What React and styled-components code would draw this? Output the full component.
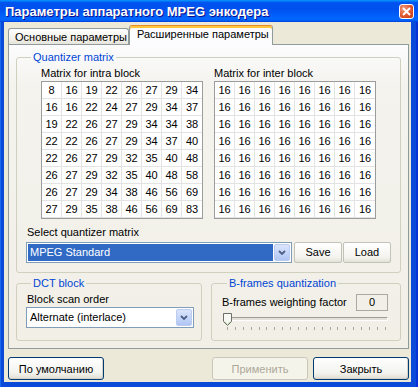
import React from 'react'
import styled, { createGlobalStyle } from 'styled-components'

const GlobalStyle = createGlobalStyle`
  html, body {
    margin: 0;
    padding: 0;
  }
  body {
    font-family: "Liberation Sans", Arial, sans-serif;
    font-size: 11px;
    color: #000;
  }
  * {
    box-sizing: border-box;
  }
`

const intra = [
  [8, 16, 19, 22, 26, 27, 29, 34],
  [16, 16, 22, 24, 27, 29, 34, 37],
  [19, 22, 26, 27, 29, 34, 34, 38],
  [22, 22, 26, 27, 29, 34, 37, 40],
  [22, 26, 27, 29, 32, 35, 40, 48],
  [26, 27, 29, 32, 35, 40, 48, 58],
  [26, 27, 29, 34, 38, 46, 56, 69],
  [27, 29, 35, 38, 46, 56, 69, 83],
]
const inter = Array.from({ length: 8 }, () => Array(8).fill(16))

const Window = styled.div`
  width: 418px;
  height: 387px;
  display: flex;
  flex-direction: column;
  background: #0a4ad8;
  box-shadow: inset -2px 0 #0831d9, inset 1px 0 #166aee;
`

const TitleBar = styled.div`
  height: 22px;
  flex: none;
  display: flex;
  align-items: center;
  justify-content: space-between;
  padding: 0 4px 0 5px;
  background: linear-gradient(
    to bottom,
    #0997ff 0%,
    #0053ee 12%,
    #0050ee 40%,
    #0066ff 85%,
    #0063fb 92%,
    #003dd7 100%
  );
  color: #fff;
  font-weight: bold;
  font-size: 13px;
  text-shadow: 1px 1px #0f1089;
`

const CloseButton = styled.div`
  width: 15px;
  height: 15px;
  border: 1px solid #fff;
  border-radius: 3px;
  background: radial-gradient(circle at 30% 30%, #f19a7c 0%, #e0552e 55%, #c13b12 100%);
  display: flex;
  align-items: center;
  justify-content: center;
`

const Client = styled.div`
  flex: 1;
  margin: 0 7px 5px 4px;
  background: #ece9d8;
  padding: 3px 2px 2px 4px;
  display: flex;
  flex-direction: column;
`

const TabRow = styled.div`
  height: 19px;
  flex: none;
  display: flex;
  align-items: flex-end;
  position: relative;
  z-index: 1;
`

const Tab = styled.div`
  width: ${(p) => p.$w}px;
  height: ${(p) => (p.$active ? 20 : 16)}px;
  margin-bottom: ${(p) => (p.$active ? -1 : 0)}px;
  border: 1px solid #919b9c;
  border-bottom: none;
  border-radius: 3px 3px 0 0;
  padding-left: ${(p) => (p.$active ? 7 : 6)}px;
  line-height: ${(p) => (p.$active ? 17 : 16)}px;
  white-space: nowrap;
  background: ${(p) =>
    p.$active ? '#fcfcfe' : 'linear-gradient(to bottom, #fefefe, #f1f0ea 70%, #e6e4da)'};
  ${(p) =>
    p.$active &&
    `
    border-top: 1px solid #e68b2c;
    box-shadow: inset 0 2px #ffc73c;
  `}
`

const Panel = styled.div`
  height: 305px;
  flex: none;
  border: 1px solid #919b9c;
  background: linear-gradient(to bottom, #fcfcfe 0, #f4f3ee 40px, #f1efe6 100%);
  padding: 6px 7px 7px 7px;
  display: flex;
  flex-direction: column;
  gap: 4px;
`

const GroupBox = styled.fieldset`
  margin: 0;
  min-width: 0;
  border: 1px solid #d0d0bf;
  border-radius: 3px;
  padding: ${(p) => p.$pad};
  flex: ${(p) => (p.$grow ? 1 : 'none')};
  display: flex;
  flex-direction: column;
`

const Legend = styled.legend`
  color: #0046d5;
  padding: 0 2px;
  margin-left: 5px;
  line-height: 13px;
`

const Caption = styled.div`
  line-height: 13px;
  white-space: nowrap;
  margin: ${(p) => p.$m || '0'};
`

const MatrixRow = styled.div`
  display: flex;
  gap: 11px;
  margin-left: 15px;
`

const MatrixColumn = styled.div`
  display: flex;
  flex-direction: column;
  gap: 1px;
`

const Grid = styled.div`
  display: grid;
  grid-template-columns: repeat(8, 20px);
  grid-auto-rows: 17px;
  border: 1px solid #9c9c9c;
  background: #fff;
`

const Cell = styled.div`
  border-right: 1px solid #e3e3e3;
  border-bottom: 1px solid #e3e3e3;
  text-align: center;
  line-height: 16px;
  &:nth-child(8n) {
    border-right: none;
  }
`

const SelectRow = styled.div`
  display: flex;
  margin-top: 3px;
`

const Combo = styled.div`
  width: ${(p) => p.$w}px;
  height: 21px;
  border: 1px solid #7f9db9;
  background: #fff;
  padding: 1px;
  display: flex;
  gap: 1px;
`

const ComboValue = styled.div`
  flex: 1;
  padding-left: 2px;
  line-height: 17px;
  white-space: nowrap;
  background: ${(p) => (p.$selected ? '#316ac5' : 'transparent')};
  color: ${(p) => (p.$selected ? '#fff' : '#000')};
`

const DropButton = styled.div`
  width: 16px;
  border: 1px solid #bccbf0;
  border-radius: 2px;
  background: linear-gradient(to bottom, #dbe5fc, #c2d3f8 60%, #b0c5f3);
  display: flex;
  align-items: center;
  justify-content: center;
`

const SmallButton = styled.div`
  width: 48px;
  height: 21px;
  margin-left: ${(p) => p.$ml}px;
  border: 1px solid #c3c2b8;
  border-radius: 2px;
  background: linear-gradient(to bottom, #ffffff, #f4f3ee 75%, #e3e1d6);
  text-align: center;
  line-height: 19px;
`

const LowerRow = styled.div`
  display: flex;
  gap: 9px;
`

const FactorRow = styled.div`
  display: flex;
  align-items: center;
  justify-content: space-between;
`

const EditBox = styled.div`
  width: 32px;
  height: 17px;
  border: 1px solid #a9a99f;
  text-align: center;
  line-height: 15px;
`

const Slider = styled.div`
  position: relative;
  height: 20px;
  padding-top: 6px;
`

const Track = styled.div`
  height: 4px;
  margin-left: 1px;
  border-top: 1px solid #9d9c99;
  border-left: 1px solid #9d9c99;
  border-bottom: 1px solid #fff;
  border-right: 1px solid #fff;
  background: #e4e2d8;
`

const Thumb = styled.svg`
  position: absolute;
  left: 1px;
  top: 2px;
`

const Ticks = styled.div`
  display: flex;
  justify-content: space-between;
  margin: 6px 2px 0 5px;
`

const Tick = styled.span`
  width: 1px;
  height: 3px;
  background: #a8a79f;
`

const Footer = styled.div`
  display: flex;
  gap: 5px;
  margin-top: 8px;
`

const Spacer = styled.div`
  flex: 1;
`

const XpButton = styled.button`
  width: 96px;
  height: 23px;
  padding: 0;
  border: 1px solid #003c74;
  border-radius: 3px;
  background: linear-gradient(to bottom, #ffffff, #f3f3ef 70%, #e0ddd2);
  box-shadow: inset -1px -1px #d6d0c5;
  font-family: "Liberation Sans", Arial, sans-serif;
  font-size: 11px;
  color: #000;

  &:disabled {
    border-color: #c9c7ba;
    background: #f5f4ea;
    box-shadow: none;
    color: #aca899;
  }
`

const Chevron = () => (
  <svg width="8" height="5" viewBox="0 0 8 5">
    <path d="M1 1 L4 4 L7 1" fill="none" stroke="#4d6185" strokeWidth="1.8" />
  </svg>
)

const Matrix = ({ title, data }) => (
  <MatrixColumn>
    <Caption>{title}</Caption>
    <Grid>
      {data.flat().map((v, i) => (
        <Cell key={i}>{v}</Cell>
      ))}
    </Grid>
  </MatrixColumn>
)

const App = () => {
  return (
    <Window>
      <GlobalStyle />
      <TitleBar>
        <span>Параметры аппаратного MPEG энкодера</span>
        <CloseButton>
          <svg width="9" height="9" viewBox="0 0 9 9">
            <path d="M1 1 L8 8 M8 1 L1 8" stroke="#fff" strokeWidth="1.8" />
          </svg>
        </CloseButton>
      </TitleBar>
      <Client>
        <TabRow>
          <Tab $w={121}>Основные параметры</Tab>
          <Tab $w={144} $active>
            Расширенные параметры
          </Tab>
        </TabRow>
        <Panel>
          <GroupBox $pad="3px 9px 9px 9px">
            <Legend>Quantizer matrix</Legend>
            <MatrixRow>
              <Matrix title="Matrix for intra block" data={intra} />
              <Matrix title="Matrix for inter block" data={inter} />
            </MatrixRow>
            <Caption $m="7px 0 0 1px">Select quantizer matrix</Caption>
            <SelectRow>
              <Combo $w={266}>
                <ComboValue $selected>MPEG Standard</ComboValue>
                <DropButton>
                  <Chevron />
                </DropButton>
              </Combo>
              <SmallButton $ml={2}>Save</SmallButton>
              <SmallButton $ml={1}>Load</SmallButton>
            </SelectRow>
          </GroupBox>
          <LowerRow>
            <GroupBox $grow $pad="3px 9px 12px 9px">
              <Legend>DCT block</Legend>
              <Caption $m="0 0 1px 1px">Block scan order</Caption>
              <Combo $w={168}>
                <ComboValue>Alternate (interlace)</ComboValue>
                <DropButton>
                  <Chevron />
                </DropButton>
              </Combo>
            </GroupBox>
            <GroupBox $grow $pad="4px 12px 0 10px">
              <Legend>B-frames quantization</Legend>
              <FactorRow>
                <Caption>B-frames weighting factor</Caption>
                <EditBox>0</EditBox>
              </FactorRow>
              <Slider>
                <Track />
                <Thumb width="9" height="13" viewBox="0 0 9 13">
                  <path
                    d="M0.5 0.5 H8.5 V8.5 L4.5 12.5 L0.5 8.5 Z"
                    fill="#f7f7f3"
                    stroke="#6f6f6a"
                  />
                  <path d="M1.5 8.5 L4.5 11.3 L7.5 8.5" fill="none" stroke="#b9d6a8" />
                </Thumb>
                <Ticks>
                  {Array.from({ length: 21 }, (_, i) => (
                    <Tick key={i} />
                  ))}
                </Ticks>
              </Slider>
            </GroupBox>
          </LowerRow>
        </Panel>
        <Footer>
          <XpButton>По умолчанию</XpButton>
          <Spacer />
          <XpButton disabled>Применить</XpButton>
          <XpButton>Закрыть</XpButton>
        </Footer>
      </Client>
    </Window>
  )
}

export default App
